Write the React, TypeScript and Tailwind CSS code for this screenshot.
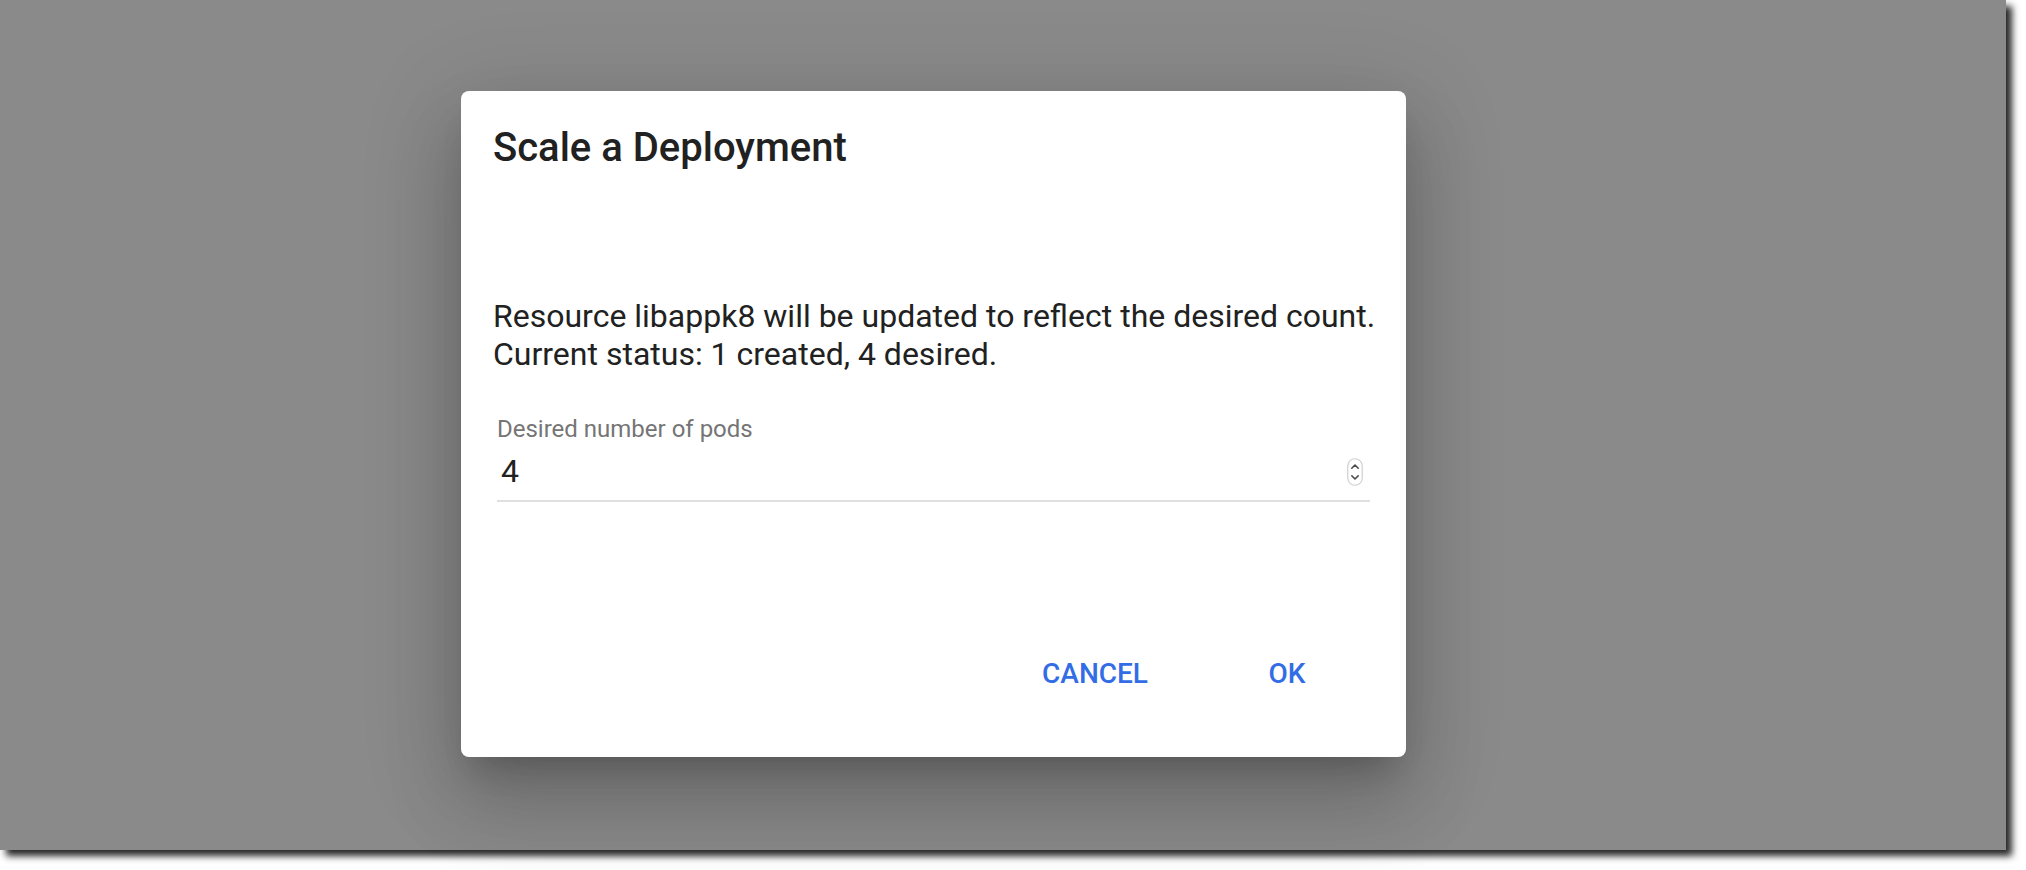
import React from "react";

function Spinner() {
  return (
    <svg width="16" height="28" viewBox="0 0 16 28" className="block">
      <rect x="0.75" y="0.75" width="14.5" height="26.5" rx="7.25" fill="#ffffff" stroke="#d0d0d0" strokeWidth="1.2" />
      <path d="M4.8 10.2 L8 7 L11.2 10.2" fill="none" stroke="#4a4a4a" strokeWidth="1.6" strokeLinecap="round" strokeLinejoin="round" />
      <path d="M4.8 17.8 L8 21 L11.2 17.8" fill="none" stroke="#4a4a4a" strokeWidth="1.6" strokeLinecap="round" strokeLinejoin="round" />
    </svg>
  );
}

export default function App() {
  return (
    <div className="w-[2026px] h-[870px] bg-white overflow-hidden font-['Roboto',sans-serif]">
      <div className="w-[2006px] h-[850px] bg-[#8a8a8a] shadow-[6px_6px_7px_rgba(0,0,0,0.85)] pt-[91px] pl-[461px]">
        <div className="w-[945px] h-[666px] bg-white rounded-[8px] shadow-[0_22px_30px_-14px_rgba(0,0,0,0.2),0_48px_76px_6px_rgba(0,0,0,0.14),0_18px_92px_16px_rgba(0,0,0,0.12)] flex flex-col px-[32px]">
          <h2 className="mt-[33px] text-[40px] leading-[48px] font-medium text-[#212121]">
            Scale a Deployment
          </h2>
          <div className="mt-[126px] text-[32px] leading-[37.5px] text-[#212121] whitespace-nowrap">
            <div>Resource libappk8 will be updated to reflect the desired count.</div>
            <div>Current status: 1 created, 4 desired.</div>
          </div>
          <div className="mx-[4px] mt-[42px] flex flex-col">
            <div className="text-[24px] leading-[28px] text-[#757575]">Desired number of pods</div>
            <div className="mt-[10px] flex items-center justify-between pl-[4px] pr-[7px] h-[38px]">
              <span className="text-[32px] leading-[37.5px] text-[#212121]">4</span>
              <Spinner />
            </div>
            <div className="mt-[9px] h-[2px] bg-[#e0e0e0]" />
          </div>
          <div className="mt-[136px] flex justify-end pr-[23px]">
            <button className="w-[168px] h-[72px] flex items-center justify-center text-[28px] leading-[36px] font-medium text-[#326de6] uppercase">
              Cancel
            </button>
            <button className="ml-[44px] w-[128px] h-[72px] flex items-center justify-center text-[28px] leading-[36px] font-medium text-[#326de6] uppercase">
              OK
            </button>
          </div>
        </div>
      </div>
    </div>
  );
}
